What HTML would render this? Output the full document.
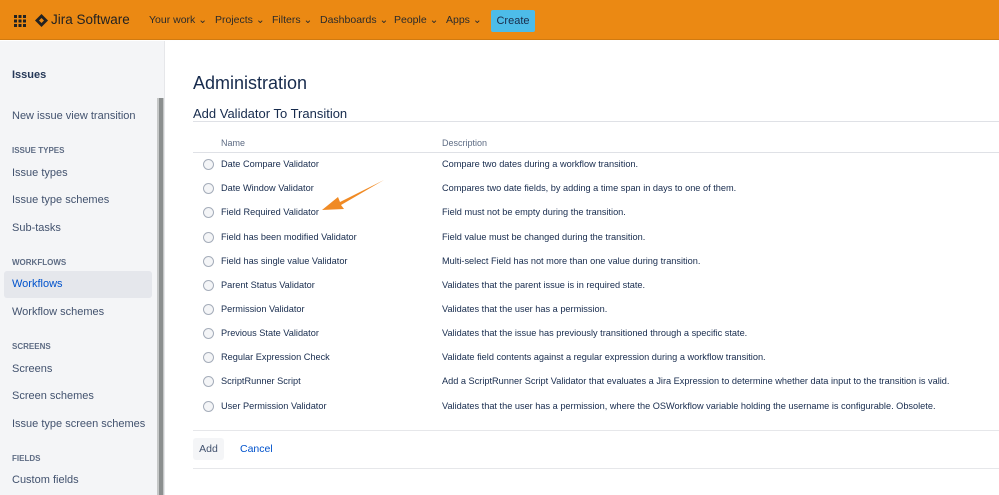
<!DOCTYPE html>
<html><head><meta charset="utf-8"><style>
*{margin:0;padding:0;box-sizing:border-box}
body{width:999px;height:495px;overflow:hidden;font-family:"Liberation Sans",sans-serif;background:#fff;position:relative;color:#172b4d}
.top{position:absolute;left:0;top:0;width:999px;height:40px;background:#eb8913;border-bottom:1px solid #d07a10}
.top .t{position:absolute;top:14px;font-size:10.5px;color:#2b2b2b;white-space:nowrap}
.side{position:absolute;left:0;top:41px;width:165px;height:454px;background:#f4f5f7;border-right:1px solid #e6e7ea}
.side div{position:absolute;left:12px;font-size:11px;color:#42526e;white-space:nowrap}
.side .h{font-size:8px;font-weight:bold;color:#5e6c84}
.sb{position:absolute;left:157px;top:98px;width:7px;height:397px;background:#8b8f8f;border-left:2px solid #c5c7c7;border-right:1px solid #c5c7c7}
.row{position:absolute;left:0;height:24px;font-size:9.2px;color:#172b4d;white-space:nowrap}
.row .r{position:absolute;left:203px;top:0;width:11px;height:11px;border:1px solid #a5adba;border-radius:50%;background:#f4f5f7}
.row .n{position:absolute;left:221px;top:0;white-space:nowrap}
.row .d{position:absolute;left:442px;top:0;white-space:nowrap}
</style></head><body>
<div class="top">
<svg style="position:absolute;left:14px;top:15px" width="12" height="12"><g fill="#222"><rect x="0" y="0" width="3" height="3"/><rect x="4.5" y="0" width="3" height="3"/><rect x="9" y="0" width="3" height="3"/><rect x="0" y="4.5" width="3" height="3"/><rect x="4.5" y="4.5" width="3" height="3"/><rect x="9" y="4.5" width="3" height="3"/><rect x="0" y="9" width="3" height="3"/><rect x="4.5" y="9" width="3" height="3"/><rect x="9" y="9" width="3" height="3"/></g></svg>
<svg style="position:absolute;left:35px;top:14px" width="13" height="13"><path d="M6.5 0L13 6.5 6.5 13 0 6.5z" fill="#222"/><path d="M6.5 4L9 6.5 6.5 9 4 6.5z" fill="#eb8913"/></svg>
<div class="t" style="left:51px;top:12px;font-size:13.5px;color:#222">Jira Software</div>
<div class="t" style="left:149px">Your work ⌄</div>
<div class="t" style="left:215px">Projects ⌄</div>
<div class="t" style="left:272px">Filters ⌄</div>
<div class="t" style="left:320px">Dashboards ⌄</div>
<div class="t" style="left:394px">People ⌄</div>
<div class="t" style="left:446px">Apps ⌄</div>
<div style="position:absolute;left:491px;top:10px;width:44px;height:22px;background:#4dbce9;border-radius:2px;font-size:11px;color:#1a2b4a;text-align:center;line-height:22px">Create</div>
</div>
<div class="side">
<div style="top:28px;font-weight:bold;color:#253858">Issues</div>
<div style="top:69px">New issue view transition</div>
<div class="h" style="top:105px">ISSUE TYPES</div>
<div style="top:126px">Issue types</div>
<div style="top:153px">Issue type schemes</div>
<div style="top:181px">Sub-tasks</div>
<div class="h" style="top:217px">WORKFLOWS</div>
<div style="left:4px;top:230px;width:148px;height:27px;background:#e5e7ec;border-radius:3px"></div>
<div style="top:237px;color:#0052cc">Workflows</div>
<div style="top:265px">Workflow schemes</div>
<div class="h" style="top:301px">SCREENS</div>
<div style="top:322px">Screens</div>
<div style="top:349px">Screen schemes</div>
<div style="top:377px">Issue type screen schemes</div>
<div class="h" style="top:413px">FIELDS</div>
<div style="top:433px">Custom fields</div>
</div>
<div class="sb"></div>
<div style="position:absolute;left:193px;top:73px;font-size:18px;color:#172b4d">Administration</div>
<div style="position:absolute;left:193px;top:106px;font-size:13px;color:#172b4d">Add Validator To Transition</div>
<div style="position:absolute;left:193px;top:121px;width:806px;border-top:1px solid #dfe1e6"></div>
<div style="position:absolute;left:221px;top:138px;font-size:9px;color:#5e6c84">Name</div>
<div style="position:absolute;left:442px;top:138px;font-size:9px;color:#5e6c84">Description</div>
<div style="position:absolute;left:193px;top:152px;width:806px;border-top:1px solid #dfe1e6"></div>
<div class="row" style="top:159px"><span class="r"></span><span class="n">Date Compare Validator</span><span class="d">Compare two dates during a workflow transition.</span></div>
<div class="row" style="top:183px"><span class="r"></span><span class="n">Date Window Validator</span><span class="d">Compares two date fields, by adding a time span in days to one of them.</span></div>
<div class="row" style="top:207px"><span class="r"></span><span class="n">Field Required Validator</span><span class="d">Field must not be empty during the transition.</span></div>
<div class="row" style="top:232px"><span class="r"></span><span class="n">Field has been modified Validator</span><span class="d">Field value must be changed during the transition.</span></div>
<div class="row" style="top:256px"><span class="r"></span><span class="n">Field has single value Validator</span><span class="d">Multi-select Field has not more than one value during transition.</span></div>
<div class="row" style="top:280px"><span class="r"></span><span class="n">Parent Status Validator</span><span class="d">Validates that the parent issue is in required state.</span></div>
<div class="row" style="top:304px"><span class="r"></span><span class="n">Permission Validator</span><span class="d">Validates that the user has a permission.</span></div>
<div class="row" style="top:328px"><span class="r"></span><span class="n">Previous State Validator</span><span class="d">Validates that the issue has previously transitioned through a specific state.</span></div>
<div class="row" style="top:352px"><span class="r"></span><span class="n">Regular Expression Check</span><span class="d">Validate field contents against a regular expression during a workflow transition.</span></div>
<div class="row" style="top:376px"><span class="r"></span><span class="n">ScriptRunner Script</span><span class="d">Add a ScriptRunner Script Validator that evaluates a Jira Expression to determine whether data input to the transition is valid.</span></div>
<div class="row" style="top:401px"><span class="r"></span><span class="n">User Permission Validator</span><span class="d">Validates that the user has a permission, where the OSWorkflow variable holding the username is configurable. Obsolete.</span></div>
<svg style="position:absolute;left:320px;top:178px" width="70" height="40"><path d="M64 2 L20 24 L18 19 L2 32 L24 31 L21 27 Z" fill="#f08a24"/></svg>
<div style="position:absolute;left:193px;top:430px;width:806px;border-top:1px solid #e6e7ea"></div>
<div style="position:absolute;left:193px;top:438px;width:31px;height:22px;background:#f4f5f7;border-radius:3px;font-size:10.5px;color:#42526e;text-align:center;line-height:22px">Add</div>
<div style="position:absolute;left:240px;top:443px;font-size:10.5px;color:#0052cc">Cancel</div>
<div style="position:absolute;left:193px;top:468px;width:806px;border-top:1px solid #e6e7ea"></div>
</body></html>
